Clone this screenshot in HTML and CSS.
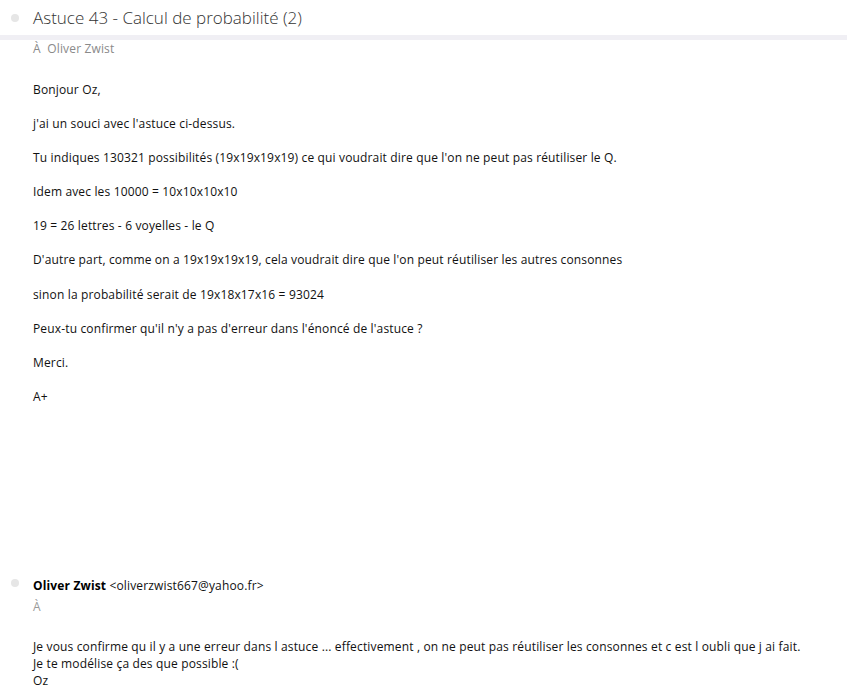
FILE: index.html
```html
<!DOCTYPE html>
<html lang="fr">
<head>
<meta charset="utf-8">
<title>Astuce 43 - Calcul de probabilité (2)</title>
<link rel="stylesheet" href="styles.css">
</head>
<body>
<div class="header">
  <span class="dot"></span>
  <h1 class="title">Astuce 43 - Calcul de probabilité (2)</h1>
</div>
<div class="bar"></div>
<div class="to">À&nbsp; Oliver Zwist</div>
<div class="body">
  <p>Bonjour Oz,</p>
  <p>j'ai un souci avec l'astuce ci-dessus.</p>
  <p>Tu indiques 130321 possibilités (19x19x19x19) ce qui voudrait dire que l'on ne peut pas réutiliser le Q.</p>
  <p>Idem avec les 10000 = 10x10x10x10</p>
  <p>19 = 26 lettres - 6 voyelles - le Q</p>
  <p>D'autre part, comme on a 19x19x19x19, cela voudrait dire que l'on peut réutiliser les autres consonnes</p>
  <p>sinon la probabilité serait de 19x18x17x16 = 93024</p>
  <p>Peux-tu confirmer qu'il n'y a pas d'erreur dans l'énoncé de l'astuce ?</p>
  <p>Merci.</p>
  <p>A+</p>
</div>
<div class="reply">
  <div class="reply-head">
    <span class="dot"></span>
    <span class="from"><b>Oliver Zwist</b> &lt;oliverzwist667@yahoo.fr&gt;</span>
  </div>
  <div class="reply-to">À</div>
  <div class="reply-body">
    Je vous confirme qu il y a une erreur dans l astuce ... effectivement , on ne peut pas réutiliser les consonnes et c est l oubli que j ai fait.<br>
    Je te modélise ça des que possible :(<br>
    Oz
  </div>
</div>
</body>
</html>
```
FILE: styles.css
```css
html, body {
  margin: 0;
  padding: 0;
  background: #ffffff;
}
body {
  font-family: "Open Sans", "Noto Sans", sans-serif;
  font-size: 12px;
  line-height: 17px;
  letter-spacing: 0.15px;
  color: #111;
}
.header {
  display: flex;
  align-items: center;
  height: 35px;
}
.dot {
  display: block;
  width: 8px;
  height: 8px;
  border-radius: 50%;
  background: #e6e6e6;
  margin-left: 11px;
  flex: none;
}
.title {
  margin: 0 0 0 14px;
  font-size: 17px;
  font-weight: 300;
  letter-spacing: 0;
  color: #333;
  line-height: 24px;
}
.bar {
  height: 5px;
  background: #f0eff4;
}
.to {
  padding-left: 33px;
  color: #8a8a8a;
  margin-top: 0;
}
.body {
  padding-left: 33px;
  margin-top: 24px;
}
.body p {
  margin: 0 0 17.1px;
}
.reply {
  margin-top: 172px;
}
.reply-head {
  display: flex;
  align-items: center;
}
.reply-head .dot {
  margin-top: -4px;
}
.from {
  margin-left: 14px;
}
.from b {
  font-weight: 700;
  color: #000;
}
.reply-to {
  padding-left: 33px;
  color: #999;
  margin-top: 4px;
}
.reply-body {
  padding-left: 33px;
  margin-top: 23px;
}
```
